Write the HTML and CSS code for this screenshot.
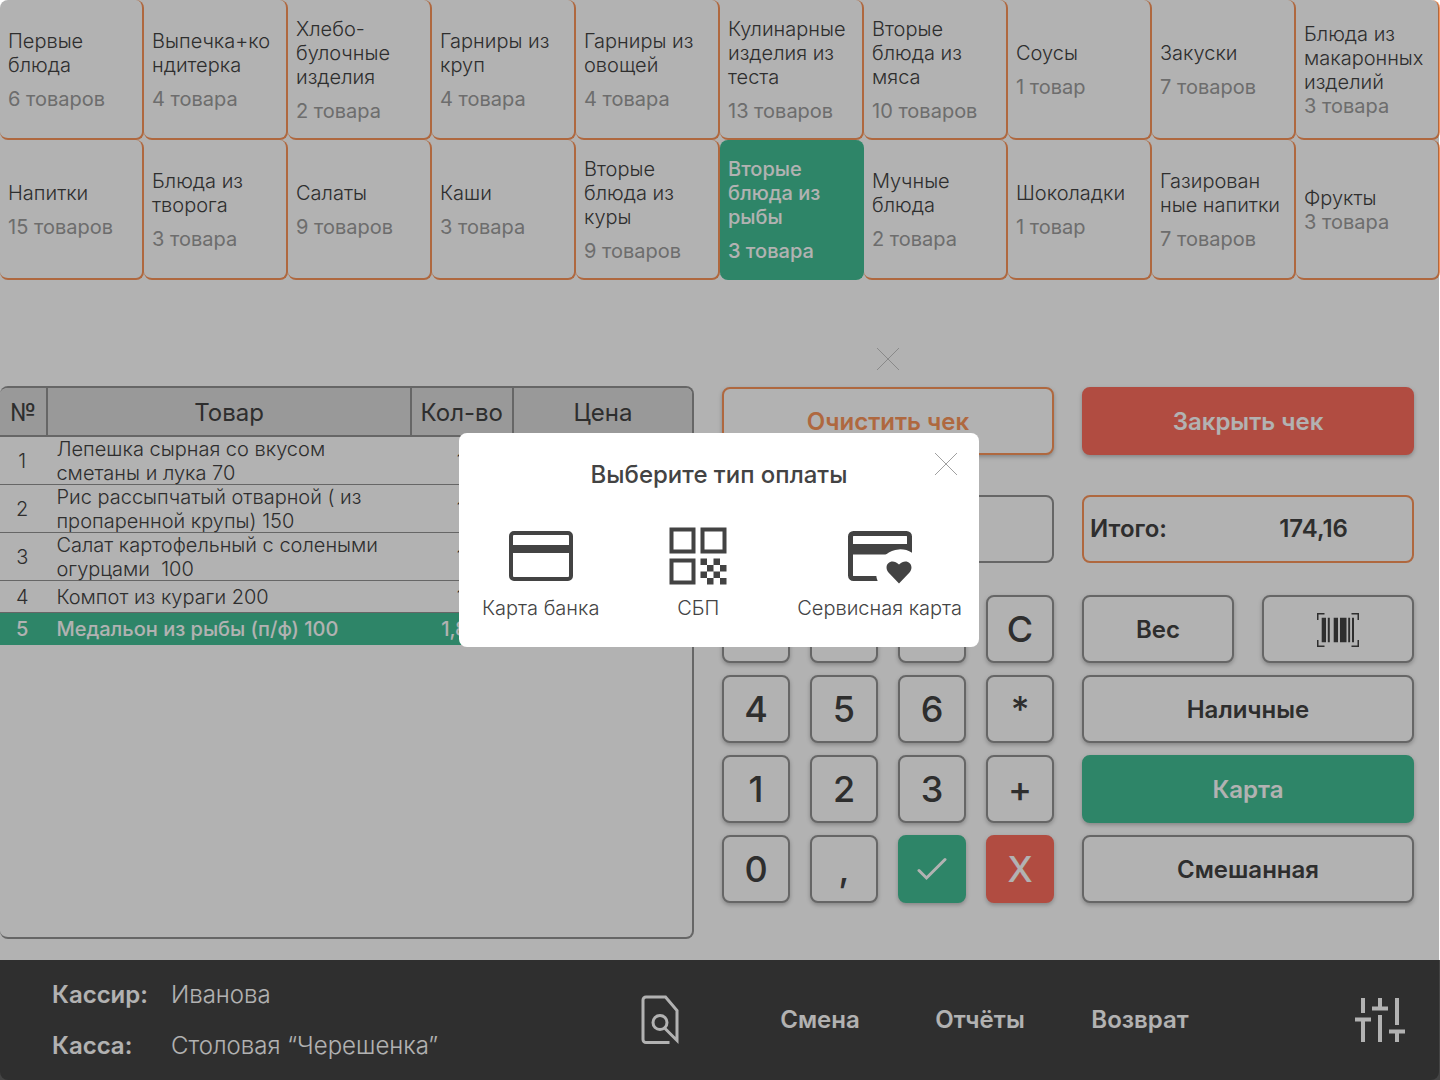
FILE: index.html
```html
<!DOCTYPE html>
<html lang="ru">
<head>
<meta charset="utf-8">
<meta name="viewport" content="width=device-width, initial-scale=1">
<title>Касса</title>
<link rel="stylesheet" href="styles.css">
</head>
<body>
<div class="page">
  <nav class="categories" aria-label="Категории">
    <button class="category" type="button"><span>Первые<br>блюда</span><span class="count">6 товаров</span></button>
    <button class="category" type="button"><span>Выпечка+ко<br>ндитерка</span><span class="count">4 товара</span></button>
    <button class="category" type="button"><span>Хлебо-<br>булочные<br>изделия</span><span class="count">2 товара</span></button>
    <button class="category" type="button"><span>Гарниры из<br>круп</span><span class="count">4 товара</span></button>
    <button class="category" type="button"><span>Гарниры из<br>овощей</span><span class="count">4 товара</span></button>
    <button class="category" type="button"><span>Кулинарные<br>изделия из<br>теста</span><span class="count">13 товаров</span></button>
    <button class="category" type="button"><span>Вторые<br>блюда из<br>мяса</span><span class="count">10 товаров</span></button>
    <button class="category" type="button"><span>Соусы</span><span class="count">1 товар</span></button>
    <button class="category" type="button"><span>Закуски</span><span class="count">7 товаров</span></button>
    <button class="category tight" type="button"><span>Блюда из<br>макаронных<br>изделий</span><span class="count">3 товара</span></button>
    <button class="category" type="button"><span>Напитки</span><span class="count">15 товаров</span></button>
    <button class="category" type="button"><span>Блюда из<br>творога</span><span class="count">3 товара</span></button>
    <button class="category" type="button"><span>Салаты</span><span class="count">9 товаров</span></button>
    <button class="category" type="button"><span>Каши</span><span class="count">3 товара</span></button>
    <button class="category" type="button"><span>Вторые<br>блюда из<br>куры</span><span class="count">9 товаров</span></button>
    <button class="category selected" type="button"><span>Вторые<br>блюда из<br>рыбы</span><span class="count">3 товара</span></button>
    <button class="category" type="button"><span>Мучные<br>блюда</span><span class="count">2 товара</span></button>
    <button class="category" type="button"><span>Шоколадки</span><span class="count">1 товар</span></button>
    <button class="category" type="button"><span>Газирован<br>ные напитки</span><span class="count">7 товаров</span></button>
    <button class="category tight" type="button"><span>Фрукты</span><span class="count">3 товара</span></button>
  </nav>

  <main class="workspace">
    <section class="receipt" aria-label="Чек">
      <table class="receipt-table">
        <colgroup><col class="col-num"><col class="col-name"><col class="col-qty"><col class="col-price"></colgroup>
        <thead>
          <tr><th scope="col">№</th><th scope="col">Товар</th><th scope="col">Кол-во</th><th scope="col">Цена</th></tr>
        </thead>
        <tbody>
          <tr><td>1</td><td>Лепешка сырная со вкусом<br>сметаны и лука 70</td><td>1</td><td></td></tr>
          <tr><td>2</td><td>Рис рассыпчатый отварной ( из<br>пропаренной крупы) 150</td><td>1</td><td></td></tr>
          <tr><td>3</td><td>Салат картофельный с солеными<br>огурцами&nbsp; 100</td><td>1</td><td></td></tr>
          <tr><td>4</td><td>Компот из кураги 200</td><td>1</td><td></td></tr>
          <tr class="current"><td>5</td><td>Медальон из рыбы (п/ф) 100</td><td>1,86</td><td></td></tr>
        </tbody>
      </table>
    </section>

    <section class="panel" aria-label="Ввод">
      <button class="icon-button dismiss" type="button" aria-label="Скрыть">
        <svg width="22" height="22" viewBox="0 0 22 22"><path d="M0 0 22 22M22 0 0 22"/></svg>
      </button>
      <button class="button outline-orange" type="button">Очистить чек</button>
      <input class="field" type="text" aria-label="Значение">
      <div class="keys">
        <button class="button key" type="button">7</button>
        <button class="button key" type="button">8</button>
        <button class="button key" type="button">9</button>
        <button class="button key" type="button">C</button>
        <button class="button key" type="button">4</button>
        <button class="button key" type="button">5</button>
        <button class="button key" type="button">6</button>
        <button class="button key" type="button">*</button>
        <button class="button key" type="button">1</button>
        <button class="button key" type="button">2</button>
        <button class="button key" type="button">3</button>
        <button class="button key" type="button">+</button>
        <button class="button key" type="button">0</button>
        <button class="button key" type="button">,</button>
        <button class="button key green" type="button" aria-label="Подтвердить">
          <svg width="30" height="24" viewBox="0 0 30 24"><path class="check" d="M2 13.500 9.500 21 28 2.500"/></svg>
        </button>
        <button class="button key red" type="button">X</button>
      </div>
    </section>

    <section class="panel payment" aria-label="Оплата">
      <button class="button red" type="button">Закрыть чек</button>
      <div class="total"><span>Итого:</span><output>174,16</output></div>
      <div class="actions">
        <button class="button" type="button">Вес</button>
        <button class="button" type="button" aria-label="Штрихкод">
          <svg width="42" height="34" viewBox="0 0 42 34">
            <path class="bracket" d="M.75 7V.75H7.500M34.500.75h6.750V7M41.250 27v6.250H34.500M7.500 33.250H.75V27"/>
            <path class="bars" d="M4.700 4.700H9v24.600H4.700zM10.800 4.700h2v24.600h-2zM16.700 4.700H21v24.600h-4.300zM23 4.700h6.500v24.600H23zM31.200 4.700h1.900v24.600h-1.900zM35 4.700h2v24.600h-2z"/>
          </svg>
        </button>
        <button class="button wide" type="button">Наличные</button>
        <button class="button wide green" type="button">Карта</button>
        <button class="button wide" type="button">Смешанная</button>
      </div>
    </section>
  </main>

  <footer class="bar">
    <dl class="session">
      <dt>Кассир:</dt><dd>Иванова</dd>
      <dt>Касса:</dt><dd>Столовая “Черешенка”</dd>
    </dl>
    <button class="bar-button" type="button" aria-label="Поиск чека">
      <svg class="doc" width="38" height="50" viewBox="0 0 38 50"><path d="M28.500 47.500H5a3 3 0 0 1-3-3V5a3 3 0 0 1 3-3h19.500L36 15.500v30L24 33.500"/><circle cx="19" cy="27.500" r="7"/></svg>
    </button>
    <button class="bar-button" type="button">Смена</button>
    <button class="bar-button" type="button">Отчёты</button>
    <button class="bar-button" type="button">Возврат</button>
    <button class="bar-button settings" type="button" aria-label="Настройки">
      <svg class="sliders" width="50" height="44" viewBox="0 0 50 44"><path d="M8 0v15M0 21.500h16M8 21.500V44M25 0v10.500M17 10.500h16M25 17v27M42 0v27M34 33.500h16M42 33.500V44"/></svg>
    </button>
  </footer>
</div>

<div class="backdrop">
  <div class="dialog" role="dialog" aria-modal="true" aria-labelledby="dialog-title">
    <h1 class="dialog-title" id="dialog-title">Выберите тип оплаты</h1>
    <button class="icon-button dialog-close" type="button" aria-label="Закрыть">
      <svg width="22" height="22" viewBox="0 0 22 22"><path d="M0 0 22 22M22 0 0 22"/></svg>
    </button>
    <div class="options">
      <button class="option" type="button">
        <svg width="64" height="64" viewBox="0 0 64 64">
          <rect x="2" y="9" width="60" height="46" rx="3" fill="none" stroke="#434343" stroke-width="4"/>
          <path d="M2 21h60v8H2z" fill="#434343"/>
        </svg>
        <span>Карта банка</span>
      </button>
      <button class="option" type="button">
        <svg width="58" height="64" viewBox="0 -3 58 64">
          <path d="M2.500 2.500h22v22h-22zM33.500 2.500h22v22h-22zM2.500 33.500h22v22h-22z" fill="none" stroke="#434343" stroke-width="4"/>
          <path d="M31.500 31.500h6.500V38h-6.500zM44.500 31.500H51V38h-6.500zM38 38h6.500v6.500H38zM51 38h6.500v6.500H51zM31.500 44.500H38V51h-6.500zM44.500 44.500H51V51h-6.500zM38 51h6.500v6.500H38zM51 51h6.500v6.500H51z" fill="#434343"/>
        </svg>
        <span>СБП</span>
      </button>
      <button class="option" type="button">
        <svg width="64" height="64" viewBox="0 0 64 64">
          <rect x="2.500" y="9.500" width="59" height="45" rx="3" fill="none" stroke="#434343" stroke-width="5"/>
          <path d="M2 20h62v10.500H2z" fill="#434343"/>
          <path d="M64 28.800A22 22 0 0 0 38 30.500A22 22 0 0 0 30 58h34z" fill="#fff"/>
          <path d="M51 59.500 40.500 48.500C34.500 41 43.500 33 51 40.500C58.500 33 67.500 41 61.500 48.500z" fill="#434343"/>
        </svg>
        <span>Сервисная карта</span>
      </button>
    </div>
  </div>
</div>
</body>
</html>
```
FILE: styles.css
```css
* { box-sizing: border-box; }

body {
  margin: 0;
  background: #fff;
  color: #434343;
  font: 300 20px/24px Inter, "Noto Sans", sans-serif;
}

button, input {
  margin: 0;
  padding: 0;
  border: 0;
  background: none;
  color: inherit;
  font: inherit;
}

.page {
  display: flex;
  flex-direction: column;
  min-height: 100vh;
}

/* Category tiles */
.categories {
  display: grid;
  grid-template-columns: repeat(10, minmax(0, 1fr));
  grid-auto-rows: 140px;
}

.category {
  display: flex;
  flex-direction: column;
  justify-content: center;
  gap: 10px;
  padding: 2px 0 0 8px;
  border: solid #fb955b;
  border-width: 0 2px 2px 0;
  border-radius: 8px;
  text-align: left;
  white-space: nowrap;
}

.category.tight { gap: 0; }
.count { color: #9c9c9c; font-weight: 400; }

.category.selected {
  border-color: #43bf95;
  background: #43bf95;
  color: #fff;
  font-weight: 500;
}

.selected .count { color: inherit; font-weight: inherit; }

/* Receipt and control panels */
.workspace {
  flex: 1;
  display: grid;
  grid-template-columns: minmax(0, 694fr) minmax(0, 332fr) minmax(0, 332fr);
  gap: 28px;
  padding: 0 26px 21px 0;
}

.receipt {
  margin-top: 106px;
  border: 2px solid #929292;
  border-left: 0;
  border-radius: 8px;
  overflow: hidden;
}

.receipt-table {
  width: 100%;
  table-layout: fixed;
  border-collapse: separate;
  border-spacing: 0;
}

.col-num { width: 7%; }
.col-name { width: 52.500%; }
.col-qty { width: 14.750%; }

.receipt-table th {
  height: 49px;
  padding: 2px 0 0;
  border: solid #929292;
  border-width: 0 2px 2px 0;
  background: #dbdbdb;
  font-size: 24px;
  font-weight: 400;
}

.receipt-table th:last-child { border-right: 0; }

.receipt-table td {
  padding: 0 4px 0 0;
  text-align: center;
  box-shadow: inset 0 -1px #929292;
}

.receipt-table td:nth-child(2) {
  padding-left: 8px;
  text-align: left;
  white-space: nowrap;
}

.receipt-table tr:nth-child(n+4) td { height: 32px; }

.receipt-table .current td {
  background: #43bf95;
  box-shadow: none;
  color: #fff;
  font-weight: 500;
}

.panel {
  display: flex;
  flex-direction: column;
}

.payment { margin-top: 107px; }

.button {
  display: flex;
  align-items: center;
  justify-content: center;
  height: 68px;
  padding-top: 1px;
  border: 2px solid #929292;
  border-radius: 8px;
  background: #fff;
  box-shadow: 0 2px 4px rgba(0, 0, 0, .25);
  font-size: 24px;
  font-weight: 600;
}

.outline-orange { border-color: #fb955b; color: #fb955b; }
.red { border-color: #fe6e5e; background: #fe6e5e; color: #fff; }
.green { border-color: #43bf95; background: #43bf95; color: #fff; }

.field, .total {
  height: 68px;
  margin: 40px 0 32px;
  border: 2px solid #929292;
  border-radius: 8px;
}

.field { width: 100%; padding: 0 8px; }

.total {
  display: grid;
  grid-template-columns: 2fr 3fr;
  align-items: center;
  border-color: #fb955b;
  font-size: 24px;
  font-weight: 600;
}

.total span { padding-left: 6px; }
.total output { text-align: center; }

.keys {
  display: grid;
  grid-template-columns: repeat(4, 1fr);
  gap: 12px 20px;
}

.key { padding-top: 0; font-size: 36px; font-weight: 500; }

.actions {
  display: grid;
  grid-template-columns: 1fr 1fr;
  gap: 12px 28px;
}

.wide { grid-column: span 2; }

.check { fill: none; stroke: #fff; stroke-width: 3; stroke-linecap: round; }
.bracket { fill: none; stroke: #434343; stroke-width: 1.500; }
.bars { fill: #434343; }

.icon-button {
  display: flex;
  align-items: center;
  justify-content: center;
  width: 32px;
  height: 32px;
}

.icon-button path { fill: none; stroke: #a0a0a0; }
.dismiss path { stroke: #c4c4c4; }

.dismiss { align-self: center; margin: 63px 0 12px; }

/* Bottom bar */
.bar {
  display: grid;
  grid-template-columns: 580fr repeat(4, 160fr) 220fr;
  align-items: center;
  height: 120px;
  background: #444;
  color: #fff;
  font-size: 24px;
}

.session {
  display: grid;
  grid-template-columns: 119px 1fr;
  gap: 27px 0;
  margin: 0;
  padding: 1px 0 0 52px;
}

.session dt { font-weight: 600; }
.session dd { margin: 0; }

.bar-button {
  display: flex;
  align-items: center;
  justify-content: center;
  font-weight: 600;
}

.settings { justify-content: flex-end; padding-right: 35px; }

.doc { fill: none; stroke: #fff; stroke-width: 3; }
.sliders { fill: none; stroke: #fff; stroke-width: 4; }

/* Payment dialog */
.backdrop {
  position: fixed;
  inset: 0 1px 0 0;
  display: flex;
  align-items: center;
  justify-content: center;
  padding-right: 1px;
  border-radius: 8px;
  background: rgba(0, 0, 0, .3);
}

.dialog {
  position: relative;
  width: 520px;
  padding: 28px 17px 27px;
  border-radius: 8px;
  background: #fff;
}

.dialog-title {
  margin: 0 0 35px;
  font-size: 24px;
  line-height: 28px;
  font-weight: 500;
  text-align: center;
}

.dialog-close {
  position: absolute;
  top: 15px;
  right: 17px;
}

.options {
  display: flex;
  justify-content: space-between;
  padding-left: 6px;
}

.option {
  display: flex;
  flex-direction: column;
  align-items: center;
  gap: 8px;
}
```
